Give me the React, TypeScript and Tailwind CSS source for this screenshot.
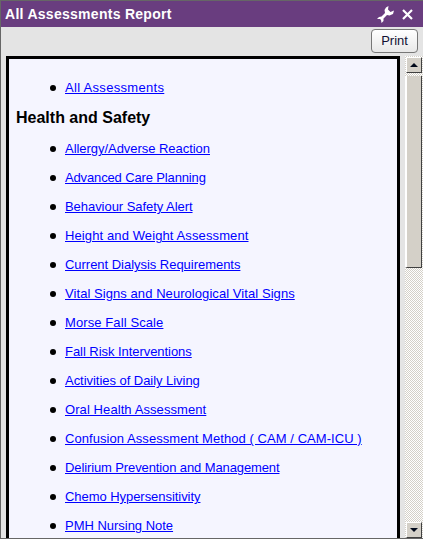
import React from 'react';

const items = [
  { label: 'Allergy/Adverse Reaction', fit: 'tracking-[-0.04px]' },
  { label: 'Advanced Care Planning', fit: 'tracking-[-0.14px]' },
  { label: 'Behaviour Safety Alert', fit: 'tracking-[-0.05px]' },
  { label: 'Height and Weight Assessment', fit: 'tracking-[0.11px]' },
  { label: 'Current Dialysis Requirements', fit: 'tracking-[-0.03px]' },
  { label: 'Vital Signs and Neurological Vital Signs', fit: 'tracking-[0.065px]' },
  { label: 'Morse Fall Scale', fit: 'tracking-[0.1px]' },
  { label: 'Fall Risk Interventions', fit: 'tracking-[-0.05px]' },
  { label: 'Activities of Daily Living', fit: 'tracking-[-0.04px]' },
  { label: 'Oral Health Assessment', fit: 'tracking-[0.085px]' },
  { label: 'Confusion Assessment Method ( CAM / CAM-ICU )', fit: 'tracking-[0.06px]' },
  { label: 'Delirium Prevention and Management', fit: 'tracking-[-0.11px]' },
  { label: 'Chemo Hypersensitivity', fit: 'tracking-[-0.05px]' },
  { label: 'PMH Nursing Note', fit: 'tracking-[-0.02px]' },
];

const Row = ({ label, fit }: { label: string; fit: string }) => (
  <li className="flex items-center h-[16px]">
    <span className="w-[6px] h-[6px] rounded-full bg-black ml-[41px] mr-[9px] shrink-0" />
    <a href="#" className={`text-[#0000ff] underline whitespace-nowrap ${fit}`}>{label}</a>
  </li>
);

const ScrollButton = ({ up }: { up?: boolean }) => (
  <div className="w-[16px] h-[16px] ml-[1px] bg-[#d4d0c8] border-t border-l border-t-white border-l-white border-r border-b border-r-[#404040] border-b-[#404040] flex items-center justify-center">
    <svg width="8" height="4" viewBox="0 0 8 4">
      <path d={up ? 'M4 0 L8 4 L0 4 Z' : 'M0 0 L8 0 L4 4 Z'} fill="#00081a" />
    </svg>
  </div>
);

const App: React.FC = () => {
  return (
    <div className="w-[423px] h-[539px] overflow-hidden bg-[#e4e4e4] border-t border-l border-b border-[#666666] flex flex-col font-['Liberation_Sans',Arial,sans-serif]">
      <div className="h-[26px] bg-[#693d7f] shrink-0 flex items-center justify-between pl-[4px] pr-[10px] text-white">
        <span className="text-[14px] font-bold tracking-[0.28px]">All Assessments Report</span>
        <div className="flex items-center gap-[8px]">
          <svg width="17" height="17" viewBox="0 0 17 17" fill="#fff">
            <path d="M11.500 0 L11 3.500 L13.500 6 L17 4.500 L16 8 L12.500 9.500 L10 9 L6.500 12.500 L6.500 15 L4.500 17 L4 14 L3 13 L0 13 L2 11 L4.500 10.500 L8 7 L7.500 4 L9 1.500 Z" />
          </svg>
          <svg width="11" height="11" viewBox="0 0 11 11" stroke="#fff" strokeWidth="2.200">
            <path d="M1 1 L10 10 M10 1 L1 10" />
          </svg>
        </div>
      </div>
      <div className="h-[29px] shrink-0 flex items-start justify-end pt-[2px] pr-[5px]">
        <button className="w-[47px] h-[24px] rounded-[4px] border border-[#777777] bg-gradient-to-b from-white to-[#e8e8e8] text-[13px] text-[#111133]">
          Print
        </button>
      </div>
      <div className="flex-1 min-h-0 flex pl-[5px]">
        <div className="w-[394px] border-[3px] border-b-0 border-black bg-[#f5f5ff] overflow-hidden text-[13px] text-black">
          <ul className="mt-[21px]">
            <Row label="All Assessments" fit="tracking-[0.31px]" />
          </ul>
          <h2 className="text-[16px] font-bold leading-[18px] mt-[13px] ml-[7px]">Health and Safety</h2>
          <ul className="mt-[14px] flex flex-col gap-[13px]">
            {items.map((item) => (
              <Row key={item.label} label={item.label} fit={item.fit} />
            ))}
          </ul>
        </div>
        <div className="ml-[5px] w-[18px] pt-[1px] flex flex-col bg-[repeating-conic-gradient(#d4d0c8_0%_25%,#ffffff_0%_50%)] bg-[length:2px_2px]">
          <ScrollButton up />
          <div className="mt-[3px] h-[192px] w-[17px] bg-[#d4d0c8] border-l-2 border-l-white border-r border-b border-r-[#404040] border-b-[#404040]" />
          <div className="flex-1" />
          <ScrollButton />
        </div>
      </div>
    </div>
  );
};

export default App;
